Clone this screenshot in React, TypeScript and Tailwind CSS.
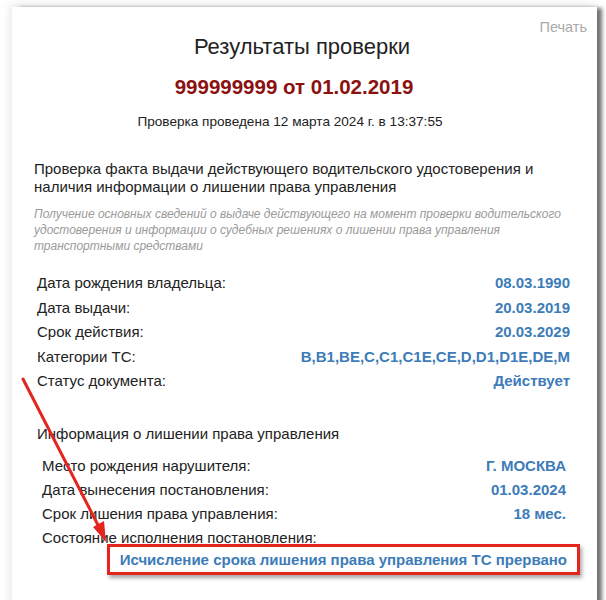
import React from "react";

const mainRows = [
  { label: "Дата рождения владельца:", value: "08.03.1990" },
  { label: "Дата выдачи:", value: "20.03.2019" },
  { label: "Срок действия:", value: "20.03.2029" },
  { label: "Категории ТС:", value: "B,B1,BE,C,C1,C1E,CE,D,D1,D1E,DE,M" },
  { label: "Статус документа:", value: "Действует" },
];

const banRows = [
  { label: "Место рождения нарушителя:", value: "Г. МОСКВА" },
  { label: "Дата вынесения постановления:", value: "01.03.2024" },
  { label: "Срок лишения права управления:", value: "18 мес." },
  { label: "Состояние исполнения постановления:", value: "" },
];

function Arrow() {
  // annotation arrow drawn over the report
  return (
    <svg className="pointer-events-none absolute left-0 top-0" width="606" height="600" viewBox="0 0 606 600">
      <line x1="23" y1="379" x2="99" y2="527" stroke="#e3241f" strokeWidth="3" strokeLinecap="round" />
      <polygon points="106,542 93,527 104,521" fill="#e3241f" />
    </svg>
  );
}

export default function App() {
  return (
    <div className="relative h-[600px] w-[606px] overflow-hidden bg-white font-['Liberation_Sans',Arial,sans-serif]">
      <div className="ml-[12px] mt-[7px] h-[640px] w-[585px] bg-white pl-[22px] pr-[27px] pt-[10px] shadow-[6px_0_4px_-1px_rgba(0,0,0,0.55),-3px_-3px_8px_rgba(0,0,0,0.08)]">
        <div className="flex justify-end">
          <span className="mr-[-17px] text-[14.5px] leading-[20px] text-[#aaa]">Печать</span>
        </div>
        <h1 className="mt-[-2px] text-center text-[22px] leading-[24px] text-[#222]">Результаты проверки</h1>
        <div className="mt-[14px] pr-[16px] text-center text-[20.5px] font-bold leading-[28px] text-[#8b1010]">999999999 от 01.02.2019</div>
        <div className="mt-[11px] pr-[24px] text-center text-[13.6px] leading-[20px] text-[#222]">Проверка проведена 12 марта 2024 г. в 13:37:55</div>

        <p className="mt-[28px] text-[15px] leading-[18px] text-[#222]">
          Проверка факта выдачи действующего водительского удостоверения и наличия информации о лишении права управления
        </p>
        <p className="mt-[10px] text-[12px] italic leading-[16px] text-[#9a9a9a]">
          Получение основных сведений о выдаче действующего на момент проверки водительского удостоверения и информации о судебных решениях о лишении права управления транспортными средствами
        </p>

        <div className="mt-[17px] pl-[3px]">
          {mainRows.map((r) => (
            <div key={r.label} className="flex items-center justify-between text-[15px] leading-[24.5px]">
              <span className="text-[#222]">{r.label}</span>
              <span className="font-bold text-[#3d7cb8]">{r.value}</span>
            </div>
          ))}
        </div>

        <div className="mt-[30px] pl-[3px] text-[15px] leading-[20px] text-[#222]">Информация о лишении права управления</div>

        <div className="mt-[10px] pl-[8px] pr-[4px]">
          {banRows.map((r) => (
            <div key={r.label} className="flex items-center justify-between text-[15px] leading-[24.3px]">
              <span className="text-[#222]">{r.label}</span>
              <span className="font-bold text-[#3d7cb8]">{r.value}</span>
            </div>
          ))}
          <div className="mt-[-7px] flex justify-end">
            <div className="mr-[-14px] border-[3px] border-[#e3241f] px-[10px] text-[15px] font-bold leading-[25px] text-[#3d7cb8] shadow-[2px_3px_4px_rgba(0,0,0,0.35)]">
              Исчисление срока лишения права управления ТС прервано
            </div>
          </div>
        </div>
      </div>
      <Arrow />
    </div>
  );
}
